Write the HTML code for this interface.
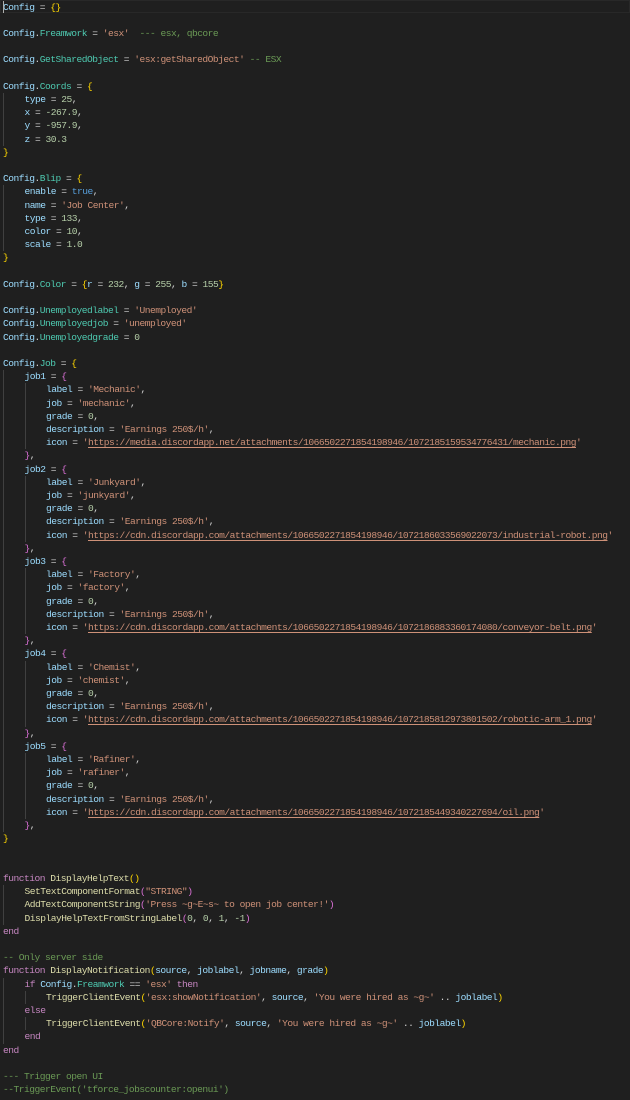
<!DOCTYPE html>
<html><head><meta charset="utf-8"><style>
html,body{margin:0;padding:0;background:#1f1f1f;width:630px;height:1100px;overflow:hidden}
pre{margin:0;padding:0.5px 0 0 3px;font-family:"Liberation Mono",monospace;font-size:9.6px;letter-spacing:-0.51px;line-height:13.2px;color:#d4d4d4;white-space:pre}
.v{color:#9cdcfe}.p{color:#4ec9b0}.s{color:#ce9178}.c{color:#6a9955}.n{color:#b5cea8}.k{color:#c586c0}.f{color:#dcdcaa}.b1{color:#ffd700}.b2{color:#da70d6}.b3{color:#179fff}.t{color:#569cd6}
.u{text-decoration:underline;text-underline-offset:2px}
i{display:inline-block;width:21px;margin-right:0.51px;height:13.2px;vertical-align:top;box-shadow:inset 1px 0 #404040}
.cur{position:absolute;left:3px;top:1px;width:1px;height:12px;background:#aeafad}
.hl{position:absolute;left:0;top:0;width:630px;height:13px;box-sizing:border-box;border:1px solid #282828}
</style></head><body>
<div class="hl"></div><div class="cur"></div>
<pre><span class="v">Config</span> = <span class="b1">{}</span>
&nbsp;
<span class="v">Config</span>.<span class="p">Freamwork</span> = <span class="s">'esx'</span>  <span class="c">--- esx, qbcore</span>
&nbsp;
<span class="v">Config</span>.<span class="p">GetSharedObject</span> = <span class="s">'esx:getSharedObject'</span> <span class="c">-- ESX</span>
&nbsp;
<span class="v">Config</span>.<span class="p">Coords</span> = <span class="b1">{</span>
<i></i><span class="v">type</span> = <span class="n">25</span>,
<i></i><span class="v">x</span> = <span class="n">-267.9</span>,
<i></i><span class="v">y</span> = <span class="n">-957.9</span>,
<i></i><span class="v">z</span> = <span class="n">30.3</span>
<span class="b1">}</span>
&nbsp;
<span class="v">Config</span>.<span class="p">Blip</span> = <span class="b1">{</span>
<i></i><span class="v">enable</span> = <span class="t">true</span>,
<i></i><span class="v">name</span> = <span class="s">'Job Center'</span>,
<i></i><span class="v">type</span> = <span class="n">133</span>,
<i></i><span class="v">color</span> = <span class="n">10</span>,
<i></i><span class="v">scale</span> = <span class="n">1.0</span>
<span class="b1">}</span>
&nbsp;
<span class="v">Config</span>.<span class="p">Color</span> = <span class="b1">{</span><span class="v">r</span> = <span class="n">232</span>, <span class="v">g</span> = <span class="n">255</span>, <span class="v">b</span> = <span class="n">155</span><span class="b1">}</span>
&nbsp;
<span class="v">Config</span>.<span class="p">Unemployedlabel</span> = <span class="s">'Unemployed'</span>
<span class="v">Config</span>.<span class="p">Unemployedjob</span> = <span class="s">'unemployed'</span>
<span class="v">Config</span>.<span class="p">Unemployedgrade</span> = <span class="n">0</span>
&nbsp;
<span class="v">Config</span>.<span class="p">Job</span> = <span class="b1">{</span>
<i></i><span class="v">job1</span> = <span class="b2">{</span>
<i></i><i></i><span class="v">label</span> = <span class="s">'Mechanic'</span>,
<i></i><i></i><span class="v">job</span> = <span class="s">'mechanic'</span>,
<i></i><i></i><span class="v">grade</span> = <span class="n">0</span>,
<i></i><i></i><span class="v">description</span> = <span class="s">'Earnings 250$/h'</span>,
<i></i><i></i><span class="v">icon</span> = <span class="s">'<span class="u">https://media.discordapp.net/attachments/1066502271854198946/1072185159534776431/mechanic.png</span>'</span>
<i></i><span class="b2">}</span>,
<i></i><span class="v">job2</span> = <span class="b2">{</span>
<i></i><i></i><span class="v">label</span> = <span class="s">'Junkyard'</span>,
<i></i><i></i><span class="v">job</span> = <span class="s">'junkyard'</span>,
<i></i><i></i><span class="v">grade</span> = <span class="n">0</span>,
<i></i><i></i><span class="v">description</span> = <span class="s">'Earnings 250$/h'</span>,
<i></i><i></i><span class="v">icon</span> = <span class="s">'<span class="u">https://cdn.discordapp.com/attachments/1066502271854198946/1072186033569022073/industrial-robot.png</span>'</span>
<i></i><span class="b2">}</span>,
<i></i><span class="v">job3</span> = <span class="b2">{</span>
<i></i><i></i><span class="v">label</span> = <span class="s">'Factory'</span>,
<i></i><i></i><span class="v">job</span> = <span class="s">'factory'</span>,
<i></i><i></i><span class="v">grade</span> = <span class="n">0</span>,
<i></i><i></i><span class="v">description</span> = <span class="s">'Earnings 250$/h'</span>,
<i></i><i></i><span class="v">icon</span> = <span class="s">'<span class="u">https://cdn.discordapp.com/attachments/1066502271854198946/1072186883360174080/conveyor-belt.png</span>'</span>
<i></i><span class="b2">}</span>,
<i></i><span class="v">job4</span> = <span class="b2">{</span>
<i></i><i></i><span class="v">label</span> = <span class="s">'Chemist'</span>,
<i></i><i></i><span class="v">job</span> = <span class="s">'chemist'</span>,
<i></i><i></i><span class="v">grade</span> = <span class="n">0</span>,
<i></i><i></i><span class="v">description</span> = <span class="s">'Earnings 250$/h'</span>,
<i></i><i></i><span class="v">icon</span> = <span class="s">'<span class="u">https://cdn.discordapp.com/attachments/1066502271854198946/1072185812973801502/robotic-arm_1.png</span>'</span>
<i></i><span class="b2">}</span>,
<i></i><span class="v">job5</span> = <span class="b2">{</span>
<i></i><i></i><span class="v">label</span> = <span class="s">'Rafiner'</span>,
<i></i><i></i><span class="v">job</span> = <span class="s">'rafiner'</span>,
<i></i><i></i><span class="v">grade</span> = <span class="n">0</span>,
<i></i><i></i><span class="v">description</span> = <span class="s">'Earnings 250$/h'</span>,
<i></i><i></i><span class="v">icon</span> = <span class="s">'<span class="u">https://cdn.discordapp.com/attachments/1066502271854198946/1072185449340227694/oil.png</span>'</span>
<i></i><span class="b2">}</span>,
<span class="b1">}</span>
&nbsp;
&nbsp;
<span class="k">function</span> <span class="f">DisplayHelpText</span><span class="b1">()</span>
<i></i><span class="f">SetTextComponentFormat</span><span class="b2">(</span><span class="s">"STRING"</span><span class="b2">)</span>
<i></i><span class="f">AddTextComponentString</span><span class="b2">(</span><span class="s">'Press ~g~E~s~ to open job center!'</span><span class="b2">)</span>
<i></i><span class="f">DisplayHelpTextFromStringLabel</span><span class="b2">(</span><span class="n">0</span>, <span class="n">0</span>, <span class="n">1</span>, <span class="n">-1</span><span class="b2">)</span>
<span class="k">end</span>
&nbsp;
<span class="c">-- Only server side</span>
<span class="k">function</span> <span class="f">DisplayNotification</span><span class="b1">(</span><span class="v">source</span>, <span class="v">joblabel</span>, <span class="v">jobname</span>, <span class="v">grade</span><span class="b1">)</span>
<i></i><span class="k">if</span> <span class="v">Config</span>.<span class="p">Freamwork</span> == <span class="s">'esx'</span> <span class="k">then</span>
<i></i><i></i><span class="f">TriggerClientEvent</span><span class="b1">(</span><span class="s">'esx:showNotification'</span>, <span class="v">source</span>, <span class="s">'You were hired as ~g~'</span> .. <span class="v">joblabel</span><span class="b1">)</span>
<i></i><span class="k">else</span>
<i></i><i></i><span class="f">TriggerClientEvent</span><span class="b1">(</span><span class="s">'QBCore:Notify'</span>, <span class="v">source</span>, <span class="s">'You were hired as ~g~'</span> .. <span class="v">joblabel</span><span class="b1">)</span>
<i></i><span class="k">end</span>
<span class="k">end</span>
&nbsp;
<span class="c">--- Trigger open UI</span>
<span class="c">--TriggerEvent('tforce_jobscounter:openui')</span>
</pre>
</body></html>
